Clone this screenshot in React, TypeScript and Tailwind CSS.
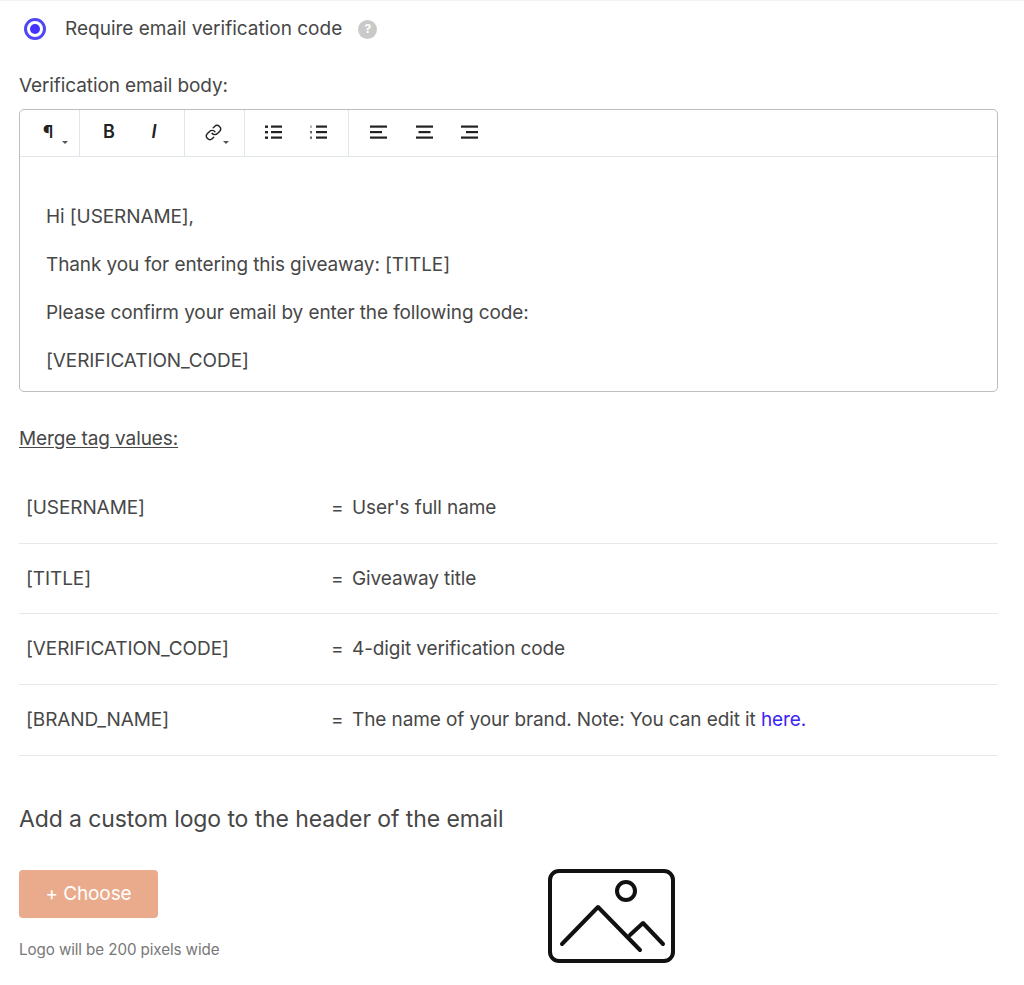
import { Link } from 'lucide-react';
import type { ReactNode } from 'react';

function ToolGroup({ children, className }: { children: ReactNode; className: string }) {
  return <div className={`flex h-[46px] items-center border-r border-[#e1e6ea] pb-[2px] ${className}`}>{children}</div>;
}

function Caret() {
  return <span className="mt-[21px] h-0 w-0 border-x-[3px] border-t-[3px] border-x-transparent border-t-[#555]" />;
}

// three thick bars, used by the alignment buttons
function AlignIcon({ x, className }: { x: number; className?: string }) {
  return (
    <svg width="17" height="14" viewBox="0 0 17 14" fill="#222" className={className}>
      <rect x="0" y="0.5" width="17" height="2.2" />
      <rect x={x} y="6" width="12" height="2.2" />
      <rect x="0" y="11.5" width="17" height="2.2" />
    </svg>
  );
}

function BulletList() {
  return (
    <svg width="17" height="14" viewBox="0 0 17 14" fill="#222">
      <rect x="0" y="0.5" width="3" height="2.4" />
      <rect x="0" y="6" width="3" height="2.4" />
      <rect x="0" y="11.5" width="3" height="2.4" />
      <rect x="6" y="0.5" width="11" height="2.2" />
      <rect x="6" y="6" width="11" height="2.2" />
      <rect x="6" y="11.5" width="11" height="2.2" />
    </svg>
  );
}

function NumberList({ className }: { className?: string }) {
  return (
    <svg width="18" height="14" viewBox="0 0 18 14" fill="#222" className={className}>
      <rect x="1.5" y="0.5" width="1" height="2.4" fill="#666" />
      <rect x="1" y="6" width="2" height="2.4" fill="#666" />
      <rect x="1" y="11.5" width="2" height="2.4" fill="#666" />
      <rect x="7" y="0.5" width="11" height="2.2" />
      <rect x="7" y="6" width="11" height="2.2" />
      <rect x="7" y="11.5" width="11" height="2.2" />
    </svg>
  );
}

function MergeRow({ tag, children }: { tag: string; children: ReactNode }) {
  return (
    <div className="flex h-[70.67px] items-center border-b border-[#e8e8e8] pt-[1px] pl-[7px]">
      <div className="w-[305px]">{tag}</div>
      <div className="w-[21px]">=</div>
      <div>{children}</div>
    </div>
  );
}

export default function App() {
  return (
    <div className="h-[985px] w-[1024px] overflow-hidden bg-white font-['Inter',sans-serif] text-[19px] tracking-[-0.1px] text-[#474747]">
      <div className="border-t border-[#f2f2f2] pr-[26px] pl-[19px]">
        <div className="flex h-[56px] items-center pl-[5px]">
          <span className="flex h-[22px] w-[22px] items-center justify-center rounded-full border-[3px] border-[#4f46f5]">
            <span className="h-[10px] w-[10px] rounded-full bg-[#4433ff]" />
          </span>
          <span className="ml-[19px] pt-[1px] tracking-normal">Require email verification code</span>
          <span className="ml-[16px] flex h-[19px] w-[19px] items-center justify-center rounded-full bg-[#c9c9c9] text-[12px] font-bold text-white">?</span>
        </div>

        <div className="mt-[16px] leading-[26px]">Verification email body:</div>

        <div className="mt-[10px] h-[283px] rounded-[5px] border border-[#bdbdbd]">
          <div className="flex h-[47px] border-b border-[#e1e6ea] text-[#222]">
            <ToolGroup className="w-[60px] pl-[23px]">
              <span className="w-[10px] text-center text-[17px] leading-none font-bold">¶</span>
              <span className="ml-[9px] flex"><Caret /></span>
            </ToolGroup>
            <ToolGroup className="w-[105px] pl-[23px]">
              <span className="w-[12px] text-center text-[18px] leading-none font-semibold">B</span>
              <span className="ml-[33px] w-[12px] text-center text-[18px] leading-none font-semibold italic">I</span>
            </ToolGroup>
            <ToolGroup className="w-[60px] pl-[20px]">
              <Link size={17} strokeWidth={2} />
              <span className="ml-[1px] flex"><Caret /></span>
            </ToolGroup>
            <ToolGroup className="w-[104px] pl-[20px]">
              <BulletList />
              <NumberList className="ml-[27px]" />
            </ToolGroup>
            <div className="flex h-[46px] items-center pb-[2px] pl-[21px]">
              <AlignIcon x={0} />
              <AlignIcon x={2.5} className="ml-[29px]" />
              <AlignIcon x={5} className="ml-[28px]" />
            </div>
          </div>
          <div className="flex flex-col gap-[22px] pt-[47px] pl-[26px] leading-[26px]">
            <p>Hi [USERNAME],</p>
            <p>Thank you for entering this giveaway: [TITLE]</p>
            <p>Please confirm your email by enter the following code:</p>
            <p>[VERIFICATION_CODE]</p>
          </div>
        </div>

        <div className="mt-[34px] leading-[26px] underline underline-offset-2">Merge tag values:</div>

        <div className="mt-[21px]">
          <MergeRow tag="[USERNAME]">User's full name</MergeRow>
          <MergeRow tag="[TITLE]">Giveaway title</MergeRow>
          <MergeRow tag="[VERIFICATION_CODE]">4-digit verification code</MergeRow>
          <MergeRow tag="[BRAND_NAME]">
            The name of your brand. Note: You can edit it <a className="text-[#3b25f5]">here.</a>
          </MergeRow>
        </div>

        <div className="mt-[48px] text-[23px] leading-[30px]">Add a custom logo to the header of the email</div>

        <div className="mt-[36px] flex">
          <div className="w-[529px]">
            <button className="h-[48px] w-[139px] rounded-[4px] bg-[#eaab8d] pt-[1px] text-white">+ Choose</button>
            <div className="mt-[22px] text-[15.2px] leading-[20px] text-[#777]">Logo will be 200 pixels wide</div>
          </div>
          <svg width="127" height="94" viewBox="0 0 127 94" fill="none" stroke="#111" strokeWidth="4" strokeLinecap="round" strokeLinejoin="round" className="-mt-[1px]">
            <rect x="2" y="2" width="123" height="90" rx="9" />
            <circle cx="78" cy="22" r="9" />
            <path d="M14 75 L50 38 L92 81" />
            <path d="M82 66 L95 54 L115 75" />
          </svg>
        </div>
      </div>
    </div>
  );
}
